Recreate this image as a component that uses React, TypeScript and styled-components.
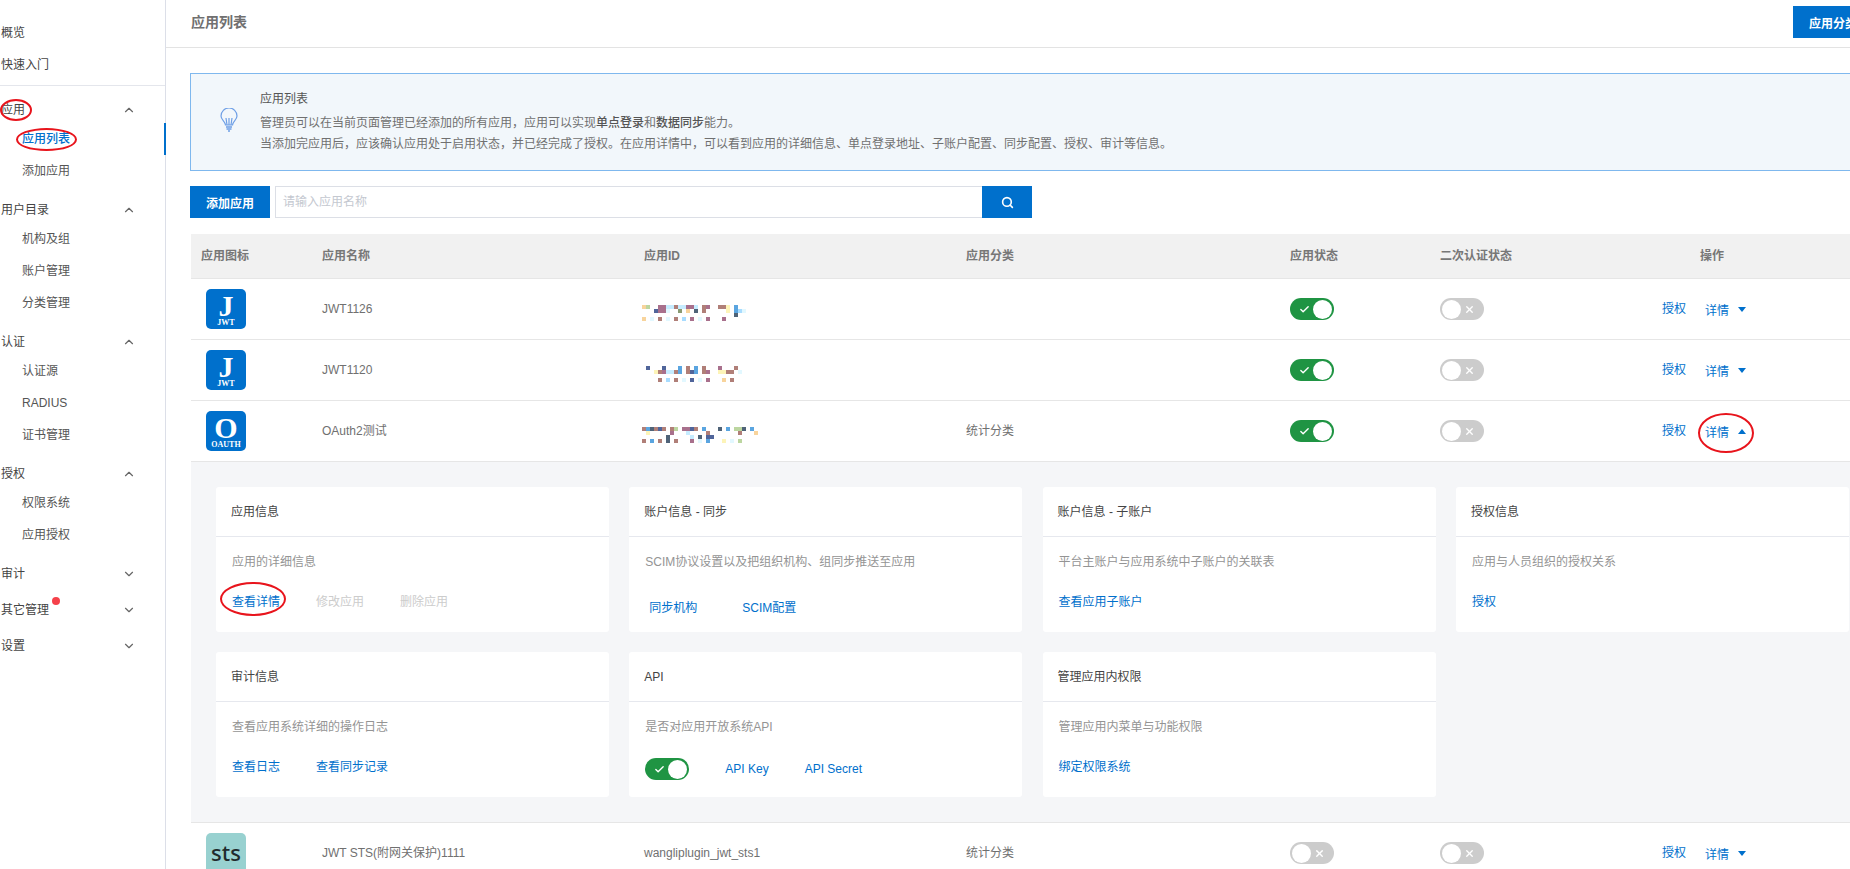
import React from "react";
import styled, { createGlobalStyle } from "styled-components";
import { ChevronDown, ChevronUp, Search, Check, X } from "lucide-react";

const Global = createGlobalStyle`
  html, body { margin: 0; padding: 0; background: #fff; }
  body { font-family: "Liberation Sans", "Noto Sans CJK SC", sans-serif; font-size: 12px; color: #666; line-height: 1.2; }
  * { box-sizing: border-box; }
`;

const Page = styled.div`
  display: flex;
  width: 1850px;
  height: 869px;
  overflow: hidden;
`;

const Sidebar = styled.aside`
  flex: none;
  width: 166px;
  height: 869px;
  border-right: 1px solid #dcdfe8;
  color: #444;
`;
const TopNav = styled.div`
  padding: 17px 0 4px;
  border-bottom: 1px solid #e4e6ec;
`;
const TopItem = styled.div`
  height: 32px;
  display: flex;
  align-items: center;
  padding-left: 1px;
`;
const Groups = styled.div`
  padding-top: 11px;
`;
const Group = styled.div`
  margin-bottom: 10px;
`;
const GroupHead = styled.div`
  height: 26px;
  display: flex;
  align-items: center;
  justify-content: space-between;
  padding: 0 29px 0 1px;
  svg {
    color: #666;
  }
`;
const Dotted = styled.span`
  position: relative;
  &::after {
    content: "";
    position: absolute;
    top: -6px;
    right: -11px;
    width: 8px;
    height: 8px;
    border-radius: 50%;
    background: #f5414a;
  }
`;
const SubItem = styled.div<{ $active?: boolean }>`
  position: relative;
  height: 32px;
  display: flex;
  align-items: center;
  padding-left: 22px;
  color: ${(p) => (p.$active ? "#0070cc" : "#555")};
  font-weight: ${(p) => (p.$active ? 500 : 400)};
  &::after {
    content: "";
    display: ${(p) => (p.$active ? "block" : "none")};
    position: absolute;
    top: 0;
    right: -1px;
    width: 2px;
    height: 32px;
    background: #0070cc;
  }
`;
const Circled = styled.span<{ $t: number; $r: number; $b: number; $l: number }>`
  position: relative;
  display: inline-block;
  line-height: 14px;
  &::after {
    content: "";
    position: absolute;
    top: ${(p) => p.$t}px;
    right: ${(p) => p.$r}px;
    bottom: ${(p) => p.$b}px;
    left: ${(p) => p.$l}px;
    border: 2px solid #e8141c;
    border-radius: 50%;
    pointer-events: none;
  }
`;

const Main = styled.main`
  flex: none;
  width: 1730px;
`;
const Header = styled.header`
  height: 48px;
  border-bottom: 1px solid #e3e3e3;
  display: flex;
  align-items: center;
  justify-content: space-between;
  padding: 0 23px 3px 25px;
`;
const Title = styled.h1`
  margin: 0;
  font-size: 14px;
  font-weight: 700;
  color: #707070;
`;
const PrimaryButton = styled.button<{ $w?: number }>`
  flex: none;
  width: ${(p) => p.$w ?? 80}px;
  height: 32px;
  padding: 0;
  border: 0;
  background: #0070cc;
  color: #fff;
  font: 700 12px "Liberation Sans", "Noto Sans CJK SC", sans-serif;
  display: flex;
  align-items: center;
  justify-content: center;
`;
const Content = styled.div`
  padding: 25px 0 0 24px;
`;
const Notice = styled.section`
  height: 98px;
  border: 1px solid #7fb8ee;
  background: #f2f7fb;
  display: flex;
  align-items: center;
  padding: 0 0 2px 29px;
`;
const BulbIcon = styled.svg`
  flex: none;
  width: 18px;
  height: 24px;
  margin: 0 22px 2px 0;
`;
const NoticeText = styled.div`
  display: flex;
  flex-direction: column;
  gap: 7px;
  line-height: 14px;
  color: #707070;
`;
const NoticeTitle = styled.div`
  color: #555;
  margin-bottom: 3px;
`;
const Strong = styled.b`
  font-weight: 500;
  color: #555;
`;
const Toolbar = styled.div`
  display: flex;
  margin-top: 15px;
`;
const SearchInput = styled.div`
  width: 707px;
  height: 32px;
  margin-left: 5px;
  border: 1px solid #dcdfe6;
  border-right: 0;
  display: flex;
  align-items: center;
  padding-left: 7px;
  color: #c4c8d0;
`;

const columns = "131px 322px 322px 324px 150px 222px 100px 1fr";
const Table = styled.div`
  margin: 16px 0 0 1px;
`;
const HeadRow = styled.div`
  display: grid;
  grid-template-columns: ${columns};
  align-items: center;
  height: 45px;
  background: #f1f1f1;
  border-bottom: 1px solid #e6e6e6;
  color: #777;
  font-weight: 700;
`;
const HeadCell = styled.div<{ $center?: boolean; $inset?: number }>`
  padding-left: ${(p) => p.$inset ?? 0}px;
  text-align: ${(p) => (p.$center ? "center" : "left")};
`;
const Row = styled.div`
  display: grid;
  grid-template-columns: ${columns};
  align-items: center;
  height: 61px;
  border-bottom: 1px solid #e6e6e6;
  color: #707070;
`;
const Cell = styled.div`
  display: flex;
  align-items: center;
  min-width: 0;
`;
const IconCell = styled(Cell)`
  padding-left: 15px;
`;
const LogoSvg = styled.svg`
  display: block;
  flex: none;
`;
const LogoLetter = styled.text`
  font-family: "Liberation Serif", serif;
  font-size: 30px;
  font-weight: 700;
  fill: #fff;
  text-anchor: middle;
`;
const LogoCaption = styled.text`
  font-family: "Liberation Serif", serif;
  font-size: 8px;
  font-weight: 700;
  fill: #fff;
  text-anchor: middle;
`;
function Logo({ letter, caption }: { letter: string; caption: string }) {
  return (
    <LogoSvg width={40} height={40} viewBox="0 0 40 40">
      <rect width="40" height="40" rx="5" fill="#0070cc" />
      <LogoLetter x="20" y="27">
        {letter}
      </LogoLetter>
      <LogoCaption x="20" y="36">
        {caption}
      </LogoCaption>
    </LogoSvg>
  );
}
const StsIcon = styled.div`
  width: 40px;
  height: 40px;
  border-radius: 5px;
  background: #98d1d0;
  display: flex;
  justify-content: center;
  font-family: "Noto Sans", sans-serif;
  font-weight: 500;
  font-size: 22px;
  line-height: 38px;
  color: #1f2a2c;
`;
const MosaicSvg = styled.svg`
  display: block;
  margin: 8px 0 0 -2px;
  filter: blur(0.7px);
`;
const palette: Record<string, string> = {
  M: "#a8708c",
  B: "#b07f78",
  N: "#50659a",
  S: "#4f6378",
  L: "#c6ecff",
  C: "#e2f8ff",
  O: "#f8d49c",
  Y: "#fdf4b8",
  G: "#bcd6a0",
  V: "#8a9a72",
  U: "#5aa5e0",
  D: "#a8dcff",
};
function Mosaic({ rows }: { rows: string[] }) {
  return (
    <MosaicSvg width={120} height={16} viewBox="0 0 120 16">
      {rows.map((r, y) =>
        r.split("").map((c, x) =>
          palette[c] ? <rect key={`${x}-${y}`} x={x * 4} y={y * 4} width={4} height={4} fill={palette[c]} /> : null
        )
      )}
    </MosaicSvg>
  );
}

const ToggleTrack = styled.span<{ $on?: boolean }>`
  display: inline-flex;
  flex: none;
  align-items: center;
  justify-content: space-between;
  flex-direction: ${(p) => (p.$on ? "row" : "row-reverse")};
  width: 44px;
  height: 22px;
  border-radius: 11px;
  background: ${(p) => (p.$on ? "#1f9443" : "#cccccc")};
  padding: ${(p) => (p.$on ? "0 2px 0 9px" : "0 9px 0 2px")};
  color: #fff;
`;
const ToggleKnob = styled.span`
  width: 19px;
  height: 19px;
  border-radius: 50%;
  background: #fff;
`;
function Toggle({ on }: { on?: boolean }) {
  return (
    <ToggleTrack $on={on}>
      {on ? <Check size={11} strokeWidth={3} /> : <X size={11} strokeWidth={3} />}
      <ToggleKnob />
    </ToggleTrack>
  );
}
const Ops = styled(Cell)`
  gap: 19px;
`;
const Link = styled.a`
  color: #0070cc;
  line-height: 14px;
`;
const DetailWrap = styled.span`
  display: inline-flex;
  align-items: center;
  margin-top: 3px;
  color: #0070cc;
`;
const Caret = styled.i<{ $up?: boolean }>`
  display: block;
  width: 0;
  height: 0;
  margin: -3px 0 0 9px;
  border-left: 4px solid transparent;
  border-right: 4px solid transparent;
  border-top: ${(p) => (p.$up ? "0" : "5px solid #0070cc")};
  border-bottom: ${(p) => (p.$up ? "5px solid #0070cc" : "0")};
`;
function Actions({ open }: { open?: boolean }) {
  return (
    <Ops>
      <Link>授权</Link>
      <DetailWrap>
        {open ? (
          <Circled $t={-13} $r={-25} $b={-13} $l={-7}>
            详情
          </Circled>
        ) : (
          <Link>详情</Link>
        )}
        <Caret $up={open} />
      </DetailWrap>
    </Ops>
  );
}

const Panel = styled.div`
  background: #f5f6f8;
  border-bottom: 1px solid #e6e6e6;
  padding: 25px 0;
  display: grid;
  grid-template-columns: repeat(4, 393px);
  column-gap: 20.3px;
  row-gap: 20px;
  padding-left: 25px;
`;
const Card = styled.article`
  height: 145px;
  background: #fff;
  border-radius: 3px;
`;
const CardHead = styled.div`
  height: 50px;
  border-bottom: 1px solid #e6e8ee;
  display: flex;
  align-items: center;
  padding: 2px 0 0 15px;
  color: #444;
`;
const CardDesc = styled.div<{ $inset?: number }>`
  margin-top: 16px;
  padding-left: ${(p) => p.$inset ?? 16}px;
  line-height: 18px;
  color: #949494;
`;
const LinkRow = styled.div<{ $top?: number; $inset?: number; $gap?: number }>`
  display: flex;
  align-items: center;
  min-height: 18px;
  margin-top: ${(p) => p.$top ?? 22}px;
  padding-left: ${(p) => p.$inset ?? 16}px;
  gap: ${(p) => p.$gap ?? 36}px;
`;
const Muted = styled.span`
  color: #ccc;
  line-height: 14px;
`;

const chevron = { size: 14, strokeWidth: 2 };

export default function App() {
  return (
    <Page>
      <Global />
      <Sidebar>
        <TopNav>
          <TopItem>概览</TopItem>
          <TopItem>快速入门</TopItem>
        </TopNav>
        <Groups>
          <Group>
            <GroupHead>
              <Circled $t={-4} $r={-7} $b={-4} $l={-1}>
                应用
              </Circled>
              <ChevronUp {...chevron} />
            </GroupHead>
            <SubItem $active>
              <Circled $t={-4} $r={-7} $b={-5} $l={-6}>
                应用列表
              </Circled>
            </SubItem>
            <SubItem>添加应用</SubItem>
          </Group>
          <Group>
            <GroupHead>
              用户目录
              <ChevronUp {...chevron} />
            </GroupHead>
            <SubItem>机构及组</SubItem>
            <SubItem>账户管理</SubItem>
            <SubItem>分类管理</SubItem>
          </Group>
          <Group>
            <GroupHead>
              认证
              <ChevronUp {...chevron} />
            </GroupHead>
            <SubItem>认证源</SubItem>
            <SubItem>RADIUS</SubItem>
            <SubItem>证书管理</SubItem>
          </Group>
          <Group>
            <GroupHead>
              授权
              <ChevronUp {...chevron} />
            </GroupHead>
            <SubItem>权限系统</SubItem>
            <SubItem>应用授权</SubItem>
          </Group>
          <Group>
            <GroupHead>
              审计
              <ChevronDown {...chevron} />
            </GroupHead>
          </Group>
          <Group>
            <GroupHead>
              <Dotted>其它管理</Dotted>
              <ChevronDown {...chevron} />
            </GroupHead>
          </Group>
          <Group>
            <GroupHead>
              设置
              <ChevronDown {...chevron} />
            </GroupHead>
          </Group>
        </Groups>
      </Sidebar>
      <Main>
        <Header>
          <Title>应用列表</Title>
          <PrimaryButton>应用分类</PrimaryButton>
        </Header>
        <Content>
          <Notice>
            <BulbIcon viewBox="0 0 18 24" fill="none" stroke="#6e9fe6" strokeWidth="1.2">
              <path d="M5.5 17C5.5 13.5 1 12 1 8a8 8 0 0 1 16 0c0 4-4.5 5.500-4.500 9z" />
              <path d="M7 17 6 10M11 17l1-7M9 17v-7" />
              <path d="M6 19h6M6.500 21h5" strokeWidth="1.500" />
              <path d="M8 23h2" strokeWidth="1.500" />
            </BulbIcon>
            <NoticeText>
              <NoticeTitle>应用列表</NoticeTitle>
              <div>
                管理员可以在当前页面管理已经添加的所有应用，应用可以实现<Strong>单点登录</Strong>和<Strong>数据同步</Strong>能力。
              </div>
              <div>
                当添加完应用后，应该确认应用处于启用状态，并已经完成了授权。在应用详情中，可以看到应用的详细信息、单点登录地址、子账户配置、同步配置、授权、审计等信息。
              </div>
            </NoticeText>
          </Notice>
          <Toolbar>
            <PrimaryButton>添加应用</PrimaryButton>
            <SearchInput>请输入应用名称</SearchInput>
            <PrimaryButton $w={50}>
              <Search size={13} strokeWidth={3} />
            </PrimaryButton>
          </Toolbar>
          <Table>
            <HeadRow>
              <HeadCell $inset={10}>应用图标</HeadCell>
              <HeadCell>应用名称</HeadCell>
              <HeadCell>应用ID</HeadCell>
              <HeadCell>应用分类</HeadCell>
              <HeadCell>应用状态</HeadCell>
              <HeadCell>二次认证状态</HeadCell>
              <HeadCell $center>操作</HeadCell>
              <HeadCell />
            </HeadRow>
            <Row>
              <IconCell>
                <Logo letter="J" caption="JWT" />
              </IconCell>
              <Cell>JWT1126</Cell>
              <Cell>
                <Mosaic rows={["OG..MMLLBLLMML.BM..BBY.U", "...NMMC..V.O.S.B.....Y.UDC", ".......................S", "O.C.B.C.B.D.M.C.M...M"]} />
              </Cell>
              <Cell />
              <Cell>
                <Toggle on />
              </Cell>
              <Cell>
                <Toggle />
              </Cell>
              <Actions />
              <Cell />
            </Row>
            <Row>
              <IconCell>
                <Logo letter="J" caption="JWT" />
              </IconCell>
              <Cell>JWT1120</Cell>
              <Cell>
                <Mosaic rows={[".N...N...U.B.U.B...M...B", "...YBMLLBU.BNU.BM..YYBB.C", "", "....B.D.B.C.N.C.M...O.B"]} />
              </Cell>
              <Cell />
              <Cell>
                <Toggle on />
              </Cell>
              <Cell>
                <Toggle />
              </Cell>
              <Actions />
              <Cell />
            </Row>
            <Row>
              <IconCell>
                <Logo letter="O" caption="OAUTH" />
              </IconCell>
              <Cell>OAuth2测试</Cell>
              <Cell>
                <Mosaic rows={["BUSBNB.BG.MMNB.U...S.U.GGS.U", ".Y.....M...L....B.......B...O", "......S.....L.S.NN", "B.U.B.S.B...M.C.U...Y.C.G"]} />
              </Cell>
              <Cell>统计分类</Cell>
              <Cell>
                <Toggle on />
              </Cell>
              <Cell>
                <Toggle />
              </Cell>
              <Actions open />
              <Cell />
            </Row>
            <Panel>
              <Card>
                <CardHead>应用信息</CardHead>
                <CardDesc>应用的详细信息</CardDesc>
                <LinkRow>
                  <Link>
                    <Circled $t={-13} $r={-6} $b={-7} $l={-12}>
                      查看详情
                    </Circled>
                  </Link>
                  <Muted>修改应用</Muted>
                  <Muted>删除应用</Muted>
                </LinkRow>
              </Card>
              <Card>
                <CardHead>账户信息 - 同步</CardHead>
                <CardDesc>SCIM协议设置以及把组织机构、组同步推送至应用</CardDesc>
                <LinkRow $top={28} $inset={20} $gap={45}>
                  <Link>同步机构</Link>
                  <Link>SCIM配置</Link>
                </LinkRow>
              </Card>
              <Card>
                <CardHead>账户信息 - 子账户</CardHead>
                <CardDesc>平台主账户与应用系统中子账户的关联表</CardDesc>
                <LinkRow>
                  <Link>查看应用子账户</Link>
                </LinkRow>
              </Card>
              <Card>
                <CardHead>授权信息</CardHead>
                <CardDesc>应用与人员组织的授权关系</CardDesc>
                <LinkRow>
                  <Link>授权</Link>
                </LinkRow>
              </Card>
              <Card>
                <CardHead>审计信息</CardHead>
                <CardDesc>查看应用系统详细的操作日志</CardDesc>
                <LinkRow>
                  <Link>查看日志</Link>
                  <Link>查看同步记录</Link>
                </LinkRow>
              </Card>
              <Card>
                <CardHead>API</CardHead>
                <CardDesc>是否对应用开放系统API</CardDesc>
                <LinkRow>
                  <Toggle on />
                  <Link>API Key</Link>
                  <Link>API Secret</Link>
                </LinkRow>
              </Card>
              <Card>
                <CardHead>管理应用内权限</CardHead>
                <CardDesc>管理应用内菜单与功能权限</CardDesc>
                <LinkRow>
                  <Link>绑定权限系统</Link>
                </LinkRow>
              </Card>
            </Panel>
            <Row>
              <IconCell>
                <StsIcon>sts</StsIcon>
              </IconCell>
              <Cell>JWT STS(附网关保护)1111</Cell>
              <Cell>wangliplugin_jwt_sts1</Cell>
              <Cell>统计分类</Cell>
              <Cell>
                <Toggle />
              </Cell>
              <Cell>
                <Toggle />
              </Cell>
              <Actions />
              <Cell />
            </Row>
          </Table>
        </Content>
      </Main>
    </Page>
  );
}
